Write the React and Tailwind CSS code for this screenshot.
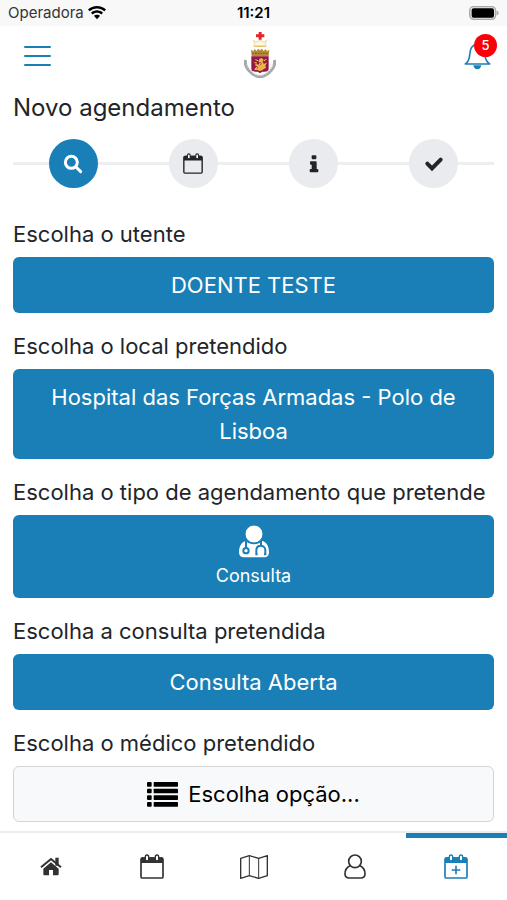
function WifiIcon() {
  return (
    <svg viewBox="0 0 54 42" className="h-[14px] w-[18px]" fill="currentColor" aria-hidden="true">
      <path d="M27 0C16.500 0 7 4 0 10.500l5 5.500C10.800 10.700 18.500 7.500 27 7.500S43.200 10.700 49 16l5-5.500C47 4 37.500 0 27 0z" />
      <path d="M27 13c-7 0-13.300 2.700-18 7l5.200 5.600C17.600 22.500 22 20.500 27 20.500s9.400 2 12.800 5.100L45 20c-4.700-4.300-11-7-18-7z" />
      <path d="M27 26c-3.600 0-6.800 1.400-9.300 3.600L27 40l9.300-10.400C33.800 27.400 30.600 26 27 26z" />
    </svg>
  );
}

function BatteryIcon() {
  return (
    <svg viewBox="0 0 90 42" className="h-[14px] w-[30px]" aria-hidden="true">
      <rect x="2" y="2" width="78" height="38" rx="12" fill="#e4e4e4" stroke="#a9a9a9" strokeWidth="4" />
      <rect x="8" y="7" width="67" height="28" rx="6" fill="#000" />
      <path d="M83 14c4 1 6 4 6 7s-2 6-6 7z" fill="#a9a9a9" />
    </svg>
  );
}

function Crest() {
  return (
    <svg viewBox="0 0 96 144" className="h-12 w-8" aria-label="Hospital das Forças Armadas" role="img">
      <path d="M44 0h9v7h8v9h-8v7h-9v-7h-8V7h8z" fill="#e3262e" />
      <path d="M28 24c5 5 9 6 13 4 4-3 10-3 14 0 4 2 8 1 13-4l-4 10 3 8H29l3-8z" fill="#fdf6e3" stroke="#eac878" strokeWidth="2" />
      <path d="M31 43h34" stroke="#e4b65a" strokeWidth="3" />
      <path d="M21 53l7 5 4-7 6 6 4-7 6 5 6-5 5 7 6-6 4 7 7-5-2 20H23z" fill="#b98a34" />
      <path d="M25 64h46" stroke="#7d5a1e" strokeWidth="3" strokeDasharray="5 3" />
      <path d="M5 84c-3 10 1 22 10 32 9 11 20 18 33 18s24-7 33-18c9-10 13-22 10-32" fill="none" stroke="#a4a7ab" strokeWidth="9" />
      <path d="M8 96c2 9 6 15 12 21 8 9 17 14 28 14s20-5 28-14c6-6 10-12 12-21" fill="none" stroke="#d5d8db" strokeWidth="3" strokeDasharray="5 3" />
      <path d="M22 73h52v37c0 7-7 9-14 9-6 0-10 2-12 5-2-3-6-5-12-5-7 0-14-2-14-9z" fill="#951748" />
      <path
        d="M53 78l6 5-3 7 4 6 9-5-5 10 2 7-7 3-4 4-8 2-9-4-7 2 2-7 9 1-1-5-8-4 2-5 8 3 4-6-4-5 4-7z"
        fill="#e8b743"
      />
      <path d="M34 83l8 3M31 92l8 1M60 86l7-4M40 105l-7 5" stroke="#f2d06c" strokeWidth="3" />
      <path d="M49 90l3 5-4 5" fill="none" stroke="#951748" strokeWidth="2" />
    </svg>
  );
}

function BellIcon() {
  return (
    <svg viewBox="0 0 81 84" className="h-7 w-[27px]" fill="none" stroke="currentColor" strokeWidth="5" aria-hidden="true">
      <path d="M4 66c9-6 12-14 13-27C18 21 24 8 40 6c16 2 22 15 23 33 1 13 5 21 14 27z" strokeLinejoin="round" />
      <path d="M28 70h24c-1 7-5 12-12 12s-11-5-12-12z" fill="currentColor" stroke="none" />
    </svg>
  );
}

function SearchIcon() {
  return (
    <svg viewBox="0 0 60 60" className="h-5 w-5" fill="none" stroke="currentColor" aria-hidden="true">
      <circle cx="25" cy="25" r="18" strokeWidth="9" />
      <path d="M39 39l14 14" strokeWidth="9" strokeLinecap="round" />
    </svg>
  );
}

function CalendarIcon({ className, plus }) {
  return (
    <svg viewBox="0 0 72 75" className={className} fill="none" stroke="currentColor" aria-hidden="true">
      <rect x="3" y="12" width="66" height="60" rx="4" strokeWidth="5" />
      <path d="M3 27V14q0-4 5-4h56q5 0 5 4v13z" fill="currentColor" stroke="none" />
      <path d="M16 18V9q0-6 5-6t5 6v9q-5 6-10 0zM46 18V9q0-6 5-6t5 6v9q-5 6-10 0z" fill="#fff" strokeWidth="4" />
      {plus && <path d="M36 35v26M23 48h26" strokeWidth="5" />}
    </svg>
  );
}

function InfoIcon() {
  return (
    <svg viewBox="0 0 30 60" className="h-5 w-[10px]" fill="currentColor" aria-hidden="true">
      <rect x="8" y="4" width="14" height="12" rx="3" />
      <path d="M6 22h14q3 0 3 3v20h2q3 0 3 3v4q0 3-3 3H5q-3 0-3-3v-4q0-3 3-3h3V32H6q-3 0-3-3v-4q0-3 3-3z" />
    </svg>
  );
}

function CheckIcon() {
  return (
    <svg viewBox="0 0 60 48" className="h-4 w-5" fill="none" stroke="currentColor" aria-hidden="true">
      <path d="M10 23l14 14L50 11" strokeWidth="12" strokeLinecap="round" />
    </svg>
  );
}

function DoctorIcon() {
  return (
    <svg viewBox="0 0 90 99" className="h-[33px] w-[30px]" aria-hidden="true">
      <path d="M20 48c15 13 35 13 50 0 13 3 20 17 20 34 0 9-5 15-14 15H14C5 97 0 91 0 82c0-17 7-31 20-34z" fill="currentColor" />
      <circle cx="45" cy="27" r="27" fill="currentColor" stroke="#1a7fb6" strokeWidth="3" />
      <g fill="none" stroke="#1a7fb6" strokeWidth="6">
        <path d="M21 48v21" />
        <circle cx="21" cy="77" r="8" />
        <path d="M66 48v14M49 88h7M52 88V76c0-9 6-14 13-14s14 5 14 14v12M75 88h7" />
      </g>
    </svg>
  );
}

function ListIcon() {
  return (
    <svg viewBox="0 0 93 75" className="h-[25px] w-[31px]" fill="currentColor" aria-hidden="true">
      {[0, 20, 40, 60].map((y) => (
        <g key={y}>
          <rect x="0" y={y} width="14" height="14" rx="3" />
          <rect x="20" y={y} width="73" height="14" rx="2" />
        </g>
      ))}
    </svg>
  );
}

function HomeIcon() {
  return (
    <svg viewBox="0 0 66 57" className="h-[19px] w-[22px]" aria-hidden="true">
      <path d="M46 2h10v24H46zM33 16l23 19v17q0 3-3 3H39V39H27v16H13q-3 0-3-3V35z" fill="currentColor" />
      <path d="M3 31L33 6l30 25" fill="none" stroke="currentColor" strokeWidth="6" />
    </svg>
  );
}

function MapIcon() {
  return (
    <svg viewBox="0 0 84 72" className="h-6 w-7" fill="none" stroke="currentColor" strokeWidth="4" strokeLinejoin="round" aria-hidden="true">
      <path d="M2 10L28 2l28 8 26-8v60l-26 8-28-8-26 8z" />
      <path d="M28 2v60M56 10v60" strokeWidth="3" />
    </svg>
  );
}

function UserIcon() {
  return (
    <svg viewBox="0 0 66 75" className="h-[25px] w-[22px]" fill="none" stroke="currentColor" strokeWidth="5" aria-hidden="true">
      <circle cx="33" cy="22" r="19" />
      <path d="M18 35C7 40 3 50 3 60c0 9 5 12 13 12h34c8 0 13-3 13-12 0-10-4-20-15-25" />
    </svg>
  );
}

const steps = [
  { name: "Pesquisa", icon: <SearchIcon />, active: true },
  { name: "Data", icon: <CalendarIcon className="h-[21px] w-5" /> },
  { name: "Informação", icon: <InfoIcon /> },
  { name: "Confirmação", icon: <CheckIcon /> },
];

const tabs = [
  { name: "Início", icon: <HomeIcon /> },
  { name: "Agenda", icon: <CalendarIcon className="h-[25px] w-6" /> },
  { name: "Mapa", icon: <MapIcon /> },
  { name: "Perfil", icon: <UserIcon /> },
  { name: "Novo agendamento", icon: <CalendarIcon className="h-[25px] w-6" plus />, active: true },
];

function Stepper() {
  return (
    <ol className="relative mt-[13px] flex before:absolute before:inset-x-0 before:top-[23px] before:h-[3px] before:bg-[#eceeef]">
      {steps.map((step) => (
        <li key={step.name} className="relative flex flex-1 justify-center">
          <button
            type="button"
            aria-label={step.name}
            className={
              step.active
                ? "flex size-[49px] items-center justify-center rounded-full bg-[#1a7fb6] text-white"
                : "flex size-[49px] items-center justify-center rounded-full bg-[#e9ebee] text-[#212529]"
            }
          >
            {step.icon}
          </button>
        </li>
      ))}
    </ol>
  );
}

function Field({ id, label, children }) {
  return (
    <div className="mt-4">
      <label htmlFor={id} className="mb-1.5 block text-[22px] leading-[34px]">
        {label}
      </label>
      {children}
    </div>
  );
}

function Choice({ id, children }) {
  return (
    <button
      id={id}
      type="button"
      className="w-full rounded-md bg-[#1a7fb6] px-6 py-[11px] text-[22px] leading-[34px] text-white"
    >
      {children}
    </button>
  );
}

export default function App() {
  return (
    <div className="flex min-h-screen flex-col bg-white font-['Inter','Liberation_Sans',sans-serif] text-[#212529]">
      <div className="grid h-[26px] grid-cols-3 items-center bg-[#f8f8f8] px-2 text-[15px] text-black">
        <div className="flex items-center gap-1 text-[#333]">
          Operadora
          <span className="text-black">
            <WifiIcon />
          </span>
        </div>
        <div className="text-center font-semibold">11:21</div>
        <div className="flex justify-end">
          <BatteryIcon />
        </div>
      </div>

      <header className="grid h-[60px] grid-cols-3 items-center pr-3 pl-6 text-[#1a7fb6]">
        <button type="button" aria-label="Menu" className="flex w-[27px] flex-col gap-[7px]">
          <span className="h-[2px] w-full rounded-full bg-[#1a7fb6]" />
          <span className="h-[2px] w-full rounded-full bg-[#1a7fb6]" />
          <span className="h-[2px] w-full rounded-full bg-[#1a7fb6]" />
        </button>
        <div className="flex justify-center">
          <Crest />
        </div>
        <button type="button" aria-label="Notificações" className="relative mr-1 justify-self-end">
          <BellIcon />
          <span className="absolute -top-2 -right-1.5 flex size-[23px] items-center justify-center rounded-full bg-[#fb0007] text-[13px] font-medium text-white">
            5
          </span>
        </button>
      </header>

      <main className="flex-1 px-[13px] pb-[9px]">
        <h1 className="mt-1 text-[24px] leading-9">Novo agendamento</h1>
        <Stepper />
        <div className="mt-[29px]">
          <Field id="utente" label="Escolha o utente">
            <Choice id="utente">DOENTE TESTE</Choice>
          </Field>
          <Field id="local" label="Escolha o local pretendido">
            <Choice id="local">Hospital das Forças Armadas - Polo de Lisboa</Choice>
          </Field>
          <Field id="tipo" label="Escolha o tipo de agendamento que pretende">
            <button
              id="tipo"
              type="button"
              className="flex w-full flex-col items-center rounded-md bg-[#1a7fb6] pt-[10px] pb-2 text-white"
            >
              <DoctorIcon />
              <span className="mt-1 text-lg leading-7">Consulta</span>
            </button>
          </Field>
          <Field id="consulta" label="Escolha a consulta pretendida">
            <Choice id="consulta">Consulta Aberta</Choice>
          </Field>
          <Field id="medico" label="Escolha o médico pretendido">
            <button
              id="medico"
              type="button"
              className="flex w-full items-center justify-center gap-2.5 rounded-md border border-[#d3d5d7] bg-[#f8f9fa] py-2.5 text-[22px] leading-[34px] text-black"
            >
              <ListIcon />
              Escolha opção...
            </button>
          </Field>
        </div>
      </main>

      <nav className="sticky bottom-0 flex border-t-2 border-[#ececec] bg-white">
        {tabs.map((tab) => (
          <a
            key={tab.name}
            href="#"
            aria-label={tab.name}
            className={
              tab.active
                ? "flex h-[67px] flex-1 items-center justify-center border-t-[5px] border-[#1a7fb6] pb-[5px] text-[#1a7fb6]"
                : "flex h-[67px] flex-1 items-center justify-center border-t-[5px] border-transparent pb-[5px] text-[#303234]"
            }
          >
            {tab.icon}
          </a>
        ))}
      </nav>
    </div>
  );
}
